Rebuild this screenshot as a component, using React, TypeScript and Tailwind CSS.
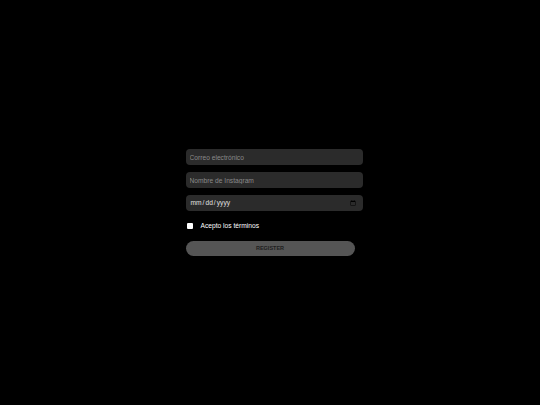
export default function App() {
  return (
    <div
      className="w-full h-screen bg-black flex items-center justify-center"
      style={{ fontFamily: '"Liberation Sans", Arial, sans-serif' }}
    >
      <form className="flex flex-col w-[177px] ml-[8px]" onSubmit={(e) => e.preventDefault()}>
        <input
          type="email"
          placeholder="Correo electrónico"
          className="h-[16px] rounded-[4px] bg-[#2b2b2b] px-[4px] text-[6.67px] text-white placeholder:text-[#8a8a8a] outline-none"
        />
        <input
          type="text"
          placeholder="Nombre de Instagram"
          className="mt-[7px] h-[16px] rounded-[4px] bg-[#2b2b2b] px-[4px] text-[6.67px] text-white placeholder:text-[#8a8a8a] outline-none"
        />
        <input
          type="date"
          className="mt-[7px] h-[16px] rounded-[4px] bg-[#2b2b2b] px-[4px] text-[6.67px] text-[#e0e0e0] outline-none"
        />
        <label className="mt-[10px] flex items-center gap-[8px] pl-[1px] text-[6.67px] text-white">
          <input type="checkbox" className="h-[6px] w-[6px] appearance-none bg-white rounded-[1px]" />
          Acepto los términos
        </label>
        <button
          type="submit"
          className="mt-[10px] h-[15px] w-[169px] rounded-full bg-[#555555] text-[5.5px] font-bold text-[#1e1e1e]"
        >
          REGISTER
        </button>
      </form>
    </div>
  )
}
